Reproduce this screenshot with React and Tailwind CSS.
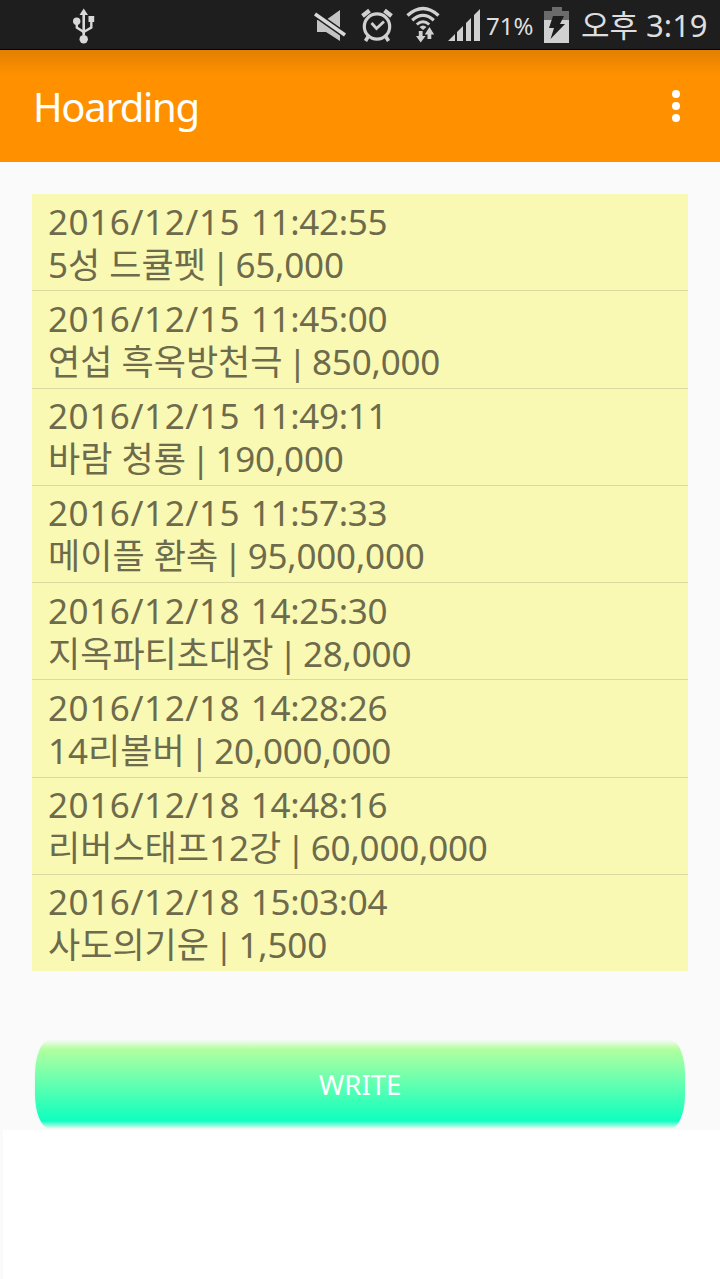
import React from "react";

const items = [
  { date: "2016/12/15", time: "11:42:55", name: "5성 드큘펫", price: "65,000" },
  { date: "2016/12/15", time: "11:45:00", name: "연섭 흑옥방천극", price: "850,000" },
  { date: "2016/12/15", time: "11:49:11", name: "바람 청룡", price: "190,000" },
  { date: "2016/12/15", time: "11:57:33", name: "메이플 환촉", price: "95,000,000" },
  { date: "2016/12/18", time: "14:25:30", name: "지옥파티초대장", price: "28,000" },
  { date: "2016/12/18", time: "14:28:26", name: "14리볼버", price: "20,000,000" },
  { date: "2016/12/18", time: "14:48:16", name: "리버스태프12강", price: "60,000,000" },
  { date: "2016/12/18", time: "15:03:04", name: "사도의기운", price: "1,500" },
];

function UsbIcon() {
  return (
    <svg className="ml-[72px] h-[50px] w-6 shrink-0" viewBox="0 0 24 50" fill="#d8d8d8">
      <path d="M11.700 8.500l4.300 6.500h-3v20h-2.600V15H7.500z" />
      <circle cx="11.700" cy="39.300" r="4.200" />
      <circle cx="4.700" cy="21.200" r="3.700" />
      <rect x="16.500" y="16" width="5.700" height="6" />
      <path d="M4.800 23v4.500l6.900 4.500M19.300 21v6.500L11.700 32" fill="none" stroke="#d8d8d8" strokeWidth="2.400" />
    </svg>
  );
}

function MuteIcon() {
  return (
    <svg className="h-[50px] w-8 shrink-0" viewBox="0 0 32 50">
      <path d="M3 20h9l14-10v31L12 32H3z" fill="#c4c4c4" />
      <path d="M1 14l30 21" stroke="#1e1e1e" strokeWidth="6.500" />
      <path d="M1 14l30 21" stroke="#d8d8d8" strokeWidth="3.600" />
    </svg>
  );
}

function AlarmIcon() {
  return (
    <svg className="ml-[15px] h-[50px] w-8 shrink-0" viewBox="0 0 32 50" fill="none" stroke="#d0d0d0">
      <circle cx="16" cy="26.500" r="12.700" strokeWidth="3.200" />
      <path d="M10.500 23l5 5.500 7.500-7" strokeWidth="2.800" />
      <path d="M1.500 16l7-5.500M30.500 16l-7-5.500" strokeWidth="4.400" />
      <path d="M7.500 36l-3 5M24.500 36l3 5" strokeWidth="3.600" />
    </svg>
  );
}

function WifiIcon() {
  return (
    <svg className="ml-[13px] h-[50px] w-[34px] shrink-0" viewBox="0 0 34 50" fill="none" stroke="#d0d0d0">
      <path d="M1.500 15.500Q17 1.500 32.500 15.500" strokeWidth="3.400" />
      <path d="M6.200 20.200Q17 10.500 27.800 20.200" strokeWidth="3.200" />
      <path d="M10.800 24.500Q17 19 23.200 24.500" strokeWidth="3" />
      <path d="M13.500 27q3.500-3 7 0L17 30z" fill="#d0d0d0" stroke="none" />
      <path d="M12.800 31h3.800v5h3L14.700 42.500 10 36h2.800zM21.500 39v-4.500h-2.800L23.500 27l4.700 7.500h-2.900V39z" fill="#d0d0d0" stroke="none" />
    </svg>
  );
}

function SignalIcon() {
  return (
    <svg className="ml-2 h-[50px] w-8 shrink-0" viewBox="0 0 32 50" fill="#d0d0d0">
      <path d="M0 41l7-7v7zM9 41v-9l6-6v15zM18 41V23l5-5v23zM26 41V15l6-6v32z" />
    </svg>
  );
}

function BatteryIcon() {
  return (
    <svg className="ml-[11px] h-[50px] w-[25px] shrink-0" viewBox="0 0 25 50">
      <path d="M8 7h10v4h7v9H0v-9h8z" fill="#6b6b6b" />
      <path d="M0 20h25v23H0z" fill="#d0d0d0" />
      <path d="M9 16h11l-4 8h5L6.500 39l3.500-11H5z" fill="#1c1c1c" />
    </svg>
  );
}

function StatusBar() {
  return (
    <div className="flex h-[50px] items-center border-b border-black bg-[#1e1e1e] text-[#dedede]">
      <UsbIcon />
      <div className="ml-[218px] flex items-center">
        <MuteIcon />
        <AlarmIcon />
        <WifiIcon />
        <SignalIcon />
        <span className="ml-1.5 mt-0.5 w-[47px] text-2xl leading-[34px]">71%</span>
        <BatteryIcon />
        <span className="ml-3 text-[31px] leading-[50px] whitespace-nowrap">오후 3:19</span>
      </div>
    </div>
  );
}

export default function App() {
  return (
    <div className="flex h-[1279px] w-[720px] flex-col overflow-hidden bg-[#fafafa] font-['Noto_Sans','Noto_Sans_CJK_KR',sans-serif]">
      <StatusBar />

      <header className="flex h-28 items-center justify-between bg-[#ff9100] bg-linear-to-b from-[#e28000] to-[#ff9100] to-22% pr-10 pl-[33px]">
        <h1 className="mt-0.5 text-[40px] leading-[56px] tracking-[-1.3px] text-white">Hoarding</h1>
        <button aria-label="menu" className="flex flex-col gap-1">
          <span className="size-2 rounded-full bg-white" />
          <span className="size-2 rounded-full bg-white" />
          <span className="size-2 rounded-full bg-white" />
        </button>
      </header>

      <ul className="mx-8 mt-8 h-[777px] bg-[#faf9b4]">
        {items.map((item) => (
          <li
            key={item.date + item.time}
            className="h-[97.25px] border-b border-[#dcdaa0] pt-[5.5px] pl-4 text-[35px] leading-[43px] whitespace-nowrap text-[#6d6b4b] last:border-b-0"
          >
            <p>
              <span className="mr-[1.5px] tracking-[0.6px]">{item.date}</span>{" "}
              <span className="tracking-[-0.3px]">{item.time}</span>
            </p>
            <p>
              {item.name} <span className="mx-[-4px]">|</span>{" "}
              <span className="tracking-[-0.2px]">{item.price}</span>
            </p>
          </li>
        ))}
      </ul>

      <div className="mt-[70px] flex h-[89px] px-[35px]">
        <button className="h-[87px] w-full rounded-[14px/34px] bg-[linear-gradient(to_bottom,#f0fbe8_0,#b2ffa0_8px,#10ffc0_79px,#14ffc2_80px,#d8fcf0_87px)] text-[27.5px] leading-[86px] text-white shadow-[0_0_2px_#c8ffdc]">
          WRITE
        </button>
      </div>

      <div className="ml-[3px] grow bg-white" />
    </div>
  );
}
